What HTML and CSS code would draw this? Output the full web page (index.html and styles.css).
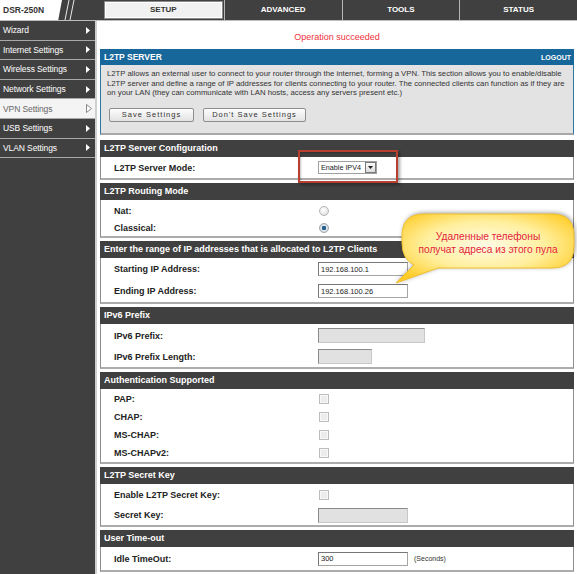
FILE: index.html
```html
<!DOCTYPE html>
<html lang="en">
<head>
  <meta charset="UTF-8">
  <title>DSR-250N - L2TP Server</title>
  <link rel="stylesheet" href="styles.css">
</head>
<body>
  <!-- Top navigation -->
  <div class="topbar">
    <div class="brand">DSR-250N</div>
    <svg class="slashes" width="41" height="20" viewBox="0 0 41 20">
      <line x1="7" y1="0" x2="3" y2="20" stroke="#e8e8e8" stroke-width="1"/>
      <line x1="12" y1="0" x2="8" y2="20" stroke="#e8e8e8" stroke-width="1"/>
    </svg>
    <div class="tabs">
      <div class="tab active">SETUP</div>
      <div class="tab">ADVANCED</div>
      <div class="tab">TOOLS</div>
      <div class="tab">STATUS</div>
    </div>
  </div>

  <div class="layout">
    <!-- Side menu -->
    <ul class="sidebar">
      <li class="nav-item">Wizard <svg class="arrow" width="4" height="7"><path d="M0 0L4 3.5L0 7Z"/></svg></li>
      <li class="nav-item">Internet Settings <svg class="arrow" width="4" height="7"><path d="M0 0L4 3.5L0 7Z"/></svg></li>
      <li class="nav-item">Wireless Settings <svg class="arrow" width="4" height="7"><path d="M0 0L4 3.5L0 7Z"/></svg></li>
      <li class="nav-item">Network Settings <svg class="arrow" width="4" height="7"><path d="M0 0L4 3.5L0 7Z"/></svg></li>
      <li class="nav-item current">VPN Settings <svg class="arrow" width="6" height="9"><path d="M0.5 0.5L5.5 4.5L0.5 8.5Z"/></svg></li>
      <li class="nav-item">USB Settings <svg class="arrow" width="4" height="7"><path d="M0 0L4 3.5L0 7Z"/></svg></li>
      <li class="nav-item">VLAN Settings <svg class="arrow" width="4" height="7"><path d="M0 0L4 3.5L0 7Z"/></svg></li>
    </ul>

    <div class="content">
      <p class="status-msg">Operation succeeded</p>

      <!-- Intro -->
      <div class="panel-intro">
        <div class="intro-head">
          <span>L2TP SERVER</span>
          <span class="logout">LOGOUT</span>
        </div>
        <div class="intro-body">
          <p>L2TP allows an external user to connect to your router through the internet, forming a VPN. This section allows you to enable/disable L2TP server and define a range of IP addresses for clients connecting to your router. The connected clients can function as if they are on your LAN (they can communicate with LAN hosts, access any servers present etc.)</p>
          <div class="buttons">
            <button class="btn">Save Settings</button>
            <button class="btn btn-wide">Don't Save Settings</button>
          </div>
        </div>
      </div>

      <div class="panel first">
        <div class="panel-head">L2TP Server Configuration</div>
        <div class="panel-body">
          <div class="row h21">
            <span class="label">L2TP Server Mode:</span>
            <span class="select"><span class="select-text">Enable IPV4</span><span class="select-btn"><svg width="5" height="3"><path d="M0 0H5L2.5 3Z" fill="#222"/></svg></span></span>
          </div>
        </div>
      </div>

      <div class="panel">
        <div class="panel-head">L2TP Routing Mode</div>
        <div class="panel-body pad">
          <div class="row h17"><span class="label">Nat:</span><input type="radio" class="radio" name="mode"></div>
          <div class="row h17"><span class="label">Classical:</span><input type="radio" class="radio" name="mode" checked></div>
        </div>
      </div>

      <div class="panel">
        <div class="panel-head">Enter the range of IP addresses that is allocated to L2TP Clients</div>
        <div class="panel-body">
          <div class="row h22"><span class="label">Starting IP Address:</span><input class="field" type="text" value="192.168.100.1"></div>
          <div class="row h22"><span class="label">Ending IP Address:</span><input class="field" type="text" value="192.168.100.26"></div>
        </div>
      </div>

      <div class="panel">
        <div class="panel-head">IPv6 Prefix</div>
        <div class="panel-body pad1">
          <div class="row h21"><span class="label">IPv6 Prefix:</span><input class="field field-off field-long" type="text" disabled></div>
          <div class="row h21"><span class="label">IPv6 Prefix Length:</span><input class="field field-off field-short" type="text" disabled></div>
        </div>
      </div>

      <div class="panel">
        <div class="panel-head">Authentication Supported</div>
        <div class="panel-body pad1">
          <div class="row h18"><span class="label">PAP:</span><input type="checkbox" class="check"></div>
          <div class="row h18"><span class="label">CHAP:</span><input type="checkbox" class="check"></div>
          <div class="row h18"><span class="label">MS-CHAP:</span><input type="checkbox" class="check"></div>
          <div class="row h18"><span class="label">MS-CHAPv2:</span><input type="checkbox" class="check"></div>
        </div>
      </div>

      <div class="panel">
        <div class="panel-head">L2TP Secret Key</div>
        <div class="panel-body pad1">
          <div class="row h20"><span class="label">Enable L2TP Secret Key:</span><input type="checkbox" class="check"></div>
          <div class="row h20"><span class="label">Secret Key:</span><input class="field field-off" type="text" disabled></div>
        </div>
      </div>

      <div class="panel">
        <div class="panel-head">User Time-out</div>
        <div class="panel-body">
          <div class="row h23"><span class="label">Idle TimeOut:</span><input class="field" type="text" value="300"><span class="unit">(Seconds)</span></div>
        </div>
      </div>
    </div>
  </div>

  <!-- Screenshot annotations -->
  <div class="annot-box"></div>
  <div class="callout">
    <svg width="190" height="84" viewBox="0 0 190 84">
      <defs>
        <radialGradient id="bubbleFill" cx="50%" cy="45%" r="62%">
          <stop offset="0" stop-color="#fffbe6"/>
          <stop offset="0.55" stop-color="#ffef9e"/>
          <stop offset="1" stop-color="#ffcc26"/>
        </radialGradient>
      </defs>
      <path d="M34 9H162Q184 9 184 31V41Q184 63 162 63H48L6 78L24 60Q12 54 12 38V31Q12 9 34 9Z" fill="url(#bubbleFill)" stroke="#f0bf2c" stroke-width="1"/>
    </svg>
    <div class="callout-text">Удаленные телефоны<br>получат адреса из этого пула</div>
  </div>
</body>
</html>
```

FILE: styles.css
```css
/* ===== base ===== */
body {
  margin: 0;
  width: 577px;
  min-height: 574px;
  font-family: "Liberation Sans", Arial, sans-serif;
  background: #fff;
  position: relative;
  overflow: hidden;
}

/* ===== top bar ===== */
.topbar {
  display: flex;
  height: 20px;
  background: #404040;
  border-bottom: 1px solid #bdbdbd;
}

.brand {
  width: 62px;
  background: #fff;
  clip-path: polygon(0 0, 100% 0, 94% 100%, 0 100%);
  font-size: 8.5px;
  font-weight: bold;
  color: #333;
  line-height: 20px;
  padding-left: 3px;
  box-sizing: border-box;
}

.slashes {
  display: block;
  flex: none;
}

.tabs {
  flex: 1;
  display: flex;
}

.tab {
  flex: 1;
  text-align: center;
  color: #fff;
  font-size: 8px;
  font-weight: bold;
  line-height: 20px;
  border-left: 1px solid #b5b5b5;
}

.tab:first-child {
  border-left: none;
}

.tab.active {
  background: #f1f1f1;
  color: #333;
  border: 1px solid #8a8a8a;
  margin: 1px;
  line-height: 16px;
  box-shadow: inset 0 0 0 1px #fff;
}

/* ===== layout ===== */
.layout {
  display: flex;
  min-height: 553px;
}

.sidebar {
  list-style: none;
  margin: 0;
  padding: 0;
  width: 95px;
  flex: none;
  background: #404040;
  border-right: 2px solid #cfcfcf;
}

.nav-item {
  display: flex;
  justify-content: space-between;
  align-items: center;
  height: 18.6px;
  padding: 0 5px 0 3px;
  border-bottom: 1px solid #a9a9a9;
  color: #fff;
  font-size: 8.5px;
  letter-spacing: -0.1px;
}

.nav-item .arrow {
  fill: #fff;
}

.nav-item.current {
  background: #f4f4f4;
  color: #666;
  padding-right: 3px;
}

.nav-item.current .arrow {
  fill: #fff;
  stroke: #888;
  stroke-width: 1;
}

.content {
  flex: 1;
  padding: 0 3px;
}

.status-msg {
  margin: 0;
  height: 28px;
  padding-top: 11px;
  box-sizing: border-box;
  text-align: center;
  color: #f0323c;
  font-size: 9px;
}

/* ===== intro panel ===== */
.intro-head {
  display: flex;
  justify-content: space-between;
  align-items: center;
  height: 16px;
  background: #17679a;
  color: #fff;
  font-size: 8.5px;
  font-weight: bold;
  padding: 0 3px 0 4px;
}

.intro-head .logout {
  font-size: 7px;
}

.intro-body {
  height: 70px;
  box-sizing: border-box;
  background: #e3e3e3;
  border: 1px solid #2f78a6;
  border-top: none;
  border-bottom: 2px solid #a8a8a8;
  padding: 4px 6px;
}

.intro-body p {
  margin: 0;
  font-size: 7.75px;
  line-height: 9.5px;
  color: #333;
}

.buttons {
  display: flex;
  gap: 9px;
  margin-top: 10px;
  padding-left: 2px;
}

.btn {
  height: 14px;
  width: 85px;
  padding: 0;
  font-family: "Liberation Sans", Arial, sans-serif;
  font-size: 7.5px;
  letter-spacing: 1px;
  color: #333;
  background: linear-gradient(#fdfdfd, #e2e2e2);
  border: 1px solid #8d8d8d;
  border-radius: 2px;
}

.btn-wide {
  width: 103px;
}

/* ===== form panels ===== */
.panel {
  margin-top: 3px;
}

.panel.first {
  margin-top: 5px;
}

.panel-head {
  height: 17px;
  line-height: 17px;
  background: #404040;
  color: #fff;
  font-size: 9px;
  font-weight: bold;
  padding-left: 4px;
}

.panel-body {
  border: 1px solid #8e8e8e;
  border-top: none;
  border-bottom: 2px solid #acacac;
}

.panel-body.pad {
  padding-top: 2px;
}

.panel-body.pad1 {
  padding-top: 1px;
}

.row {
  display: flex;
  align-items: center;
  padding-left: 13px;
}

.h17 { height: 17px; }
.h18 { height: 18px; }
.h20 { height: 20px; }
.h21 { height: 21px; }
.h22 { height: 22px; }
.h23 { height: 23px; }

.label {
  width: 204px;
  flex: none;
  font-size: 9px;
  font-weight: bold;
  color: #222;
}

/* ===== controls ===== */
.field {
  width: 90px;
  height: 14px;
  box-sizing: border-box;
  margin: 0;
  padding: 0 2px;
  font-family: "Liberation Sans", Arial, sans-serif;
  font-size: 7.5px;
  color: #222;
  background: #fff;
  border: 1px solid #a5a5a5;
  border-top-color: #777;
  border-left-color: #777;
}

.field-off {
  background: #e1e1e1;
  height: 15px;
  border-color: #c8c8c8;
  border-top-color: #8a8a8a;
  border-left-color: #8a8a8a;
}

.field-long {
  width: 107px;
}

.field-short {
  width: 54px;
}

.unit {
  margin-left: 6px;
  font-size: 7px;
  color: #333;
}

.select {
  display: flex;
  align-items: center;
  width: 59px;
  height: 13px;
  box-sizing: border-box;
  border: 1px solid #a0a0a0;
  background: #fff;
  margin-top: -1px;
}

.select-text {
  flex: 1;
  font-size: 7.2px;
  color: #222;
  padding-left: 2px;
}

.select-btn {
  display: flex;
  align-items: center;
  justify-content: center;
  width: 11px;
  height: 11px;
  box-sizing: border-box;
  border: 1px solid #7a7a7a;
  background: linear-gradient(#fafafa, #dcdcdc);
}

.select-btn svg {
  display: block;
}

.radio {
  appearance: none;
  margin: 0 0 0 1px;
  width: 10px;
  height: 10px;
  border-radius: 50%;
  border: 1px solid #b4b4b4;
  background: radial-gradient(circle at 40% 35%, #fff, #d9d9d9);
}

.radio:checked {
  background: radial-gradient(circle, #2b5f8c 0, #2b5f8c 2px, #dfe6ec 2.5px, #c9d1d8 100%);
  border-color: #9aa6b0;
}

.check {
  appearance: none;
  margin: 0 0 0 1px;
  width: 10px;
  height: 10px;
  border: 1px solid #bdbdbd;
  background: #ececec;
  box-shadow: inset 0 0 0 1px #f8f8f8;
}

/* ===== annotations over the screenshot ===== */
.annot-box {
  position: absolute;
  left: 298px;
  top: 150px;
  width: 100px;
  height: 33px;
  box-sizing: border-box;
  border: 2.5px solid #b9402f;
  box-shadow: 2px 2px 3px rgba(0,0,0,0.35), inset 1px 1px 2px rgba(0,0,0,0.25);
}

.callout {
  position: absolute;
  left: 390px;
  top: 205px;
  width: 190px;
  height: 84px;
}

.callout svg {
  display: block;
  filter: drop-shadow(1px -1px 2px rgba(0,0,0,0.35));
}

.callout-text {
  position: absolute;
  left: 12px;
  top: 25px;
  width: 172px;
  text-align: center;
  font-size: 10.2px;
  line-height: 13px;
  color: #e4243a;
}
```
